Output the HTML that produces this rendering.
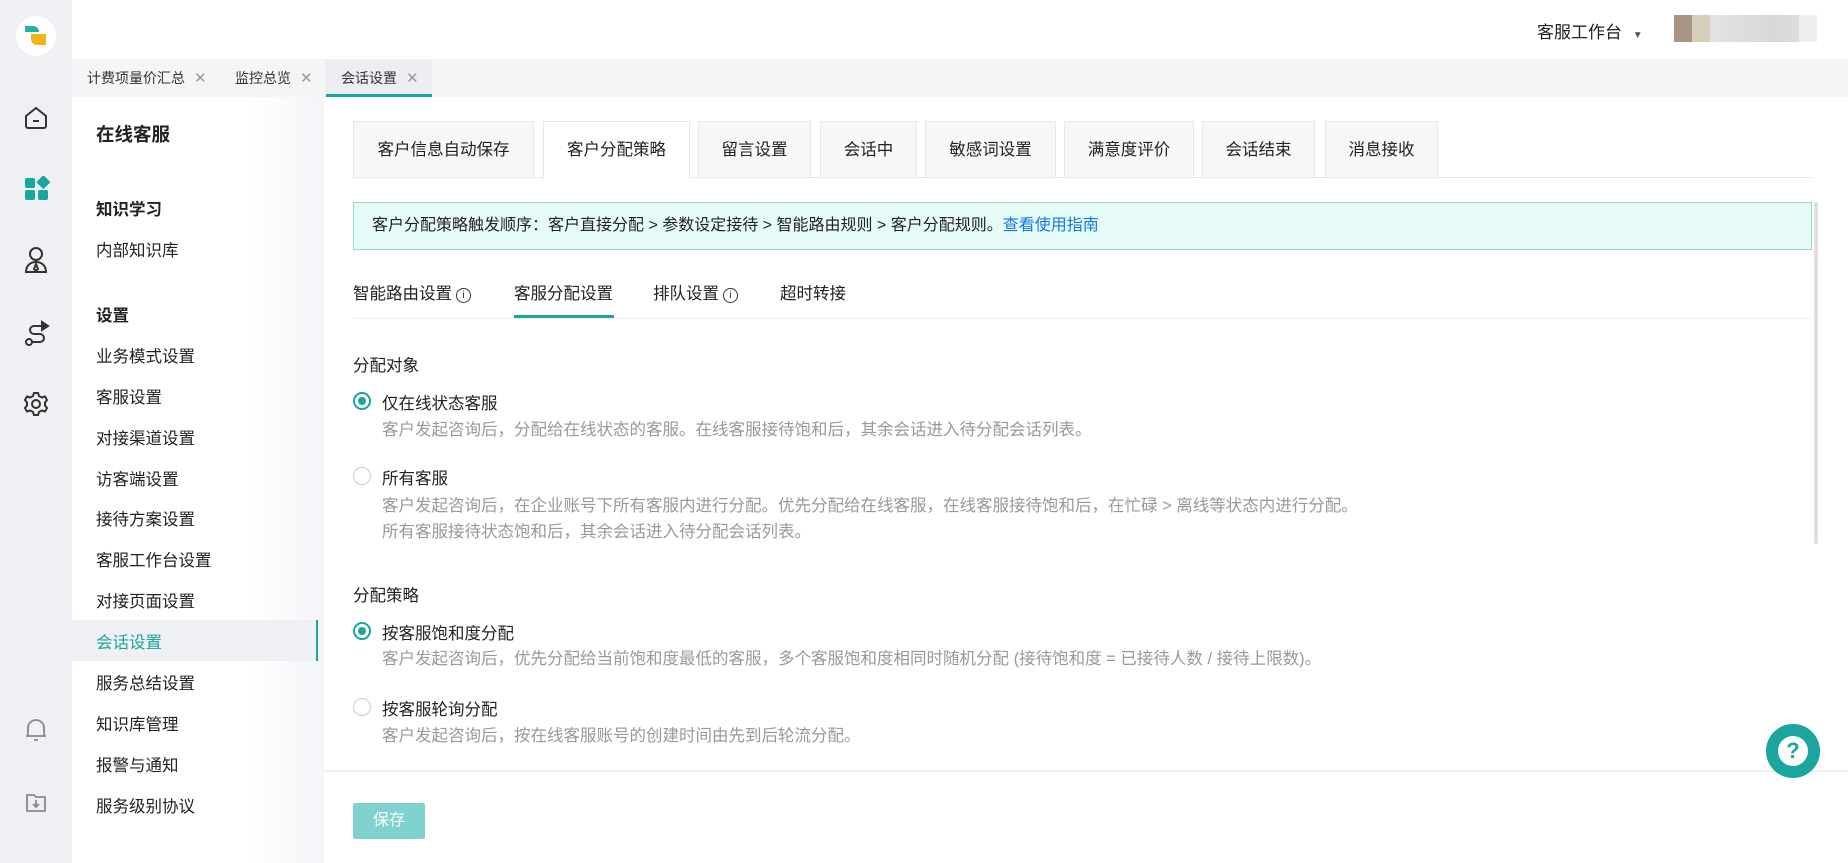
<!DOCTYPE html>
<html><head><meta charset="utf-8"><style>
*{box-sizing:border-box;margin:0;padding:0}
body{width:1848px;height:863px;overflow:hidden;background:#fff;font-family:"Liberation Sans","Noto Sans CJK SC",sans-serif;color:#222;position:relative}
.abs{position:absolute}
#rail{left:0;top:0;width:72px;height:863px;background:#eef0f3}
#hdr{left:72px;top:0;width:1776px;height:59px;background:#fff}
#tabbar{left:72px;top:59px;width:1776px;height:38px;background:#f4f5f7}
.tt{position:absolute;top:59px;height:38px;line-height:38px;font-size:14px;color:#333}
.tt .x{color:#999;margin-left:9px;font-size:15px}
#side{left:72px;top:97px;width:252px;height:766px;background:linear-gradient(90deg,#fff 0%,#fff 70%,#f3f5f8 100%)}
.sm{position:absolute;left:96px;font-size:16.5px;color:#222}
.sb{font-weight:bold}
.tab{position:absolute;top:121px;height:57px;line-height:56px;text-align:center;font-size:16.5px;background:#f7f7f7;border:1px solid #e8e8e8;color:#222}
.tab.on{background:#fff;border-bottom-color:#fff;height:58px}
.st{position:absolute;top:280px;font-size:16.5px;color:#222}
.info{display:inline-block;width:15px;height:15px;border:1.3px solid #333;border-radius:50%;font-size:10px;line-height:13px;text-align:center;vertical-align:1px;margin-left:4px}
.rad{position:absolute;left:353px;width:18px;height:18px;border-radius:50%;border:1px solid #ccc;background:#fff}
.rad.on{border:2px solid #1aa59f}
.rad.on::after{content:"";position:absolute;left:3px;top:3px;width:8px;height:8px;border-radius:50%;background:#1aa59f}
.lbl{position:absolute;left:382px;font-size:16.5px;color:#222}
.dsc{position:absolute;left:382px;font-size:16.5px;color:#999}
.h{position:absolute;left:353px;font-size:16.5px;color:#222}
</style></head><body>
<div id="rail" class="abs"></div>
<div class="abs" style="left:16px;top:16px;width:40px;height:40px;border-radius:50%;background:#fff"></div>
<svg class="abs" style="left:24px;top:25px" width="24" height="22"><path d="M1 1h8a6 6 0 0 1 6 6H1z" fill="#1fb0a8"/><path d="M7 9h15v11h-9a6 6 0 0 1-6-6z" fill="#f6b21a"/></svg>
<svg class="abs" style="left:22px;top:104px" width="28" height="28" fill="none" stroke="#333" stroke-width="2"><path d="M4 12L14 4l10 8v10a2 2 0 0 1-2 2H6a2 2 0 0 1-2-2z"/><path d="M11 17h6"/></svg>
<svg class="abs" style="left:24px;top:176px" width="26" height="26" fill="#1aa59f"><rect x="1" y="2" width="10" height="10" rx="2"/><rect x="14" y="1" width="10" height="10" rx="1" transform="rotate(45 19 6.5)"/><rect x="1" y="14" width="10" height="10" rx="2"/><rect x="14" y="14" width="10" height="10" rx="2"/></svg>
<svg class="abs" style="left:23px;top:246px" width="26" height="28" fill="none" stroke="#333" stroke-width="2"><circle cx="13" cy="8" r="6"/><path d="M3 26c0-6 4-10 10-10s10 4 10 10z"/><path d="M13 18l-2 5 2 2 2-2z"/></svg>
<svg class="abs" style="left:24px;top:320px" width="26" height="28" fill="none" stroke="#333" stroke-width="2"><path d="M18 6H10a4 4 0 0 0 0 8h6a4 4 0 0 1 0 8H8"/><circle cx="5" cy="22" r="3"/><path d="M18 2l6 4-6 4z" fill="#333"/></svg>
<svg class="abs" style="left:23px;top:391px" width="26" height="26" fill="none" stroke="#333" stroke-width="2"><circle cx="13" cy="13" r="4"/><path d="M11 2h4l1 3 3 1.5 3-1 2 3.5-2 2.5v3l2 2.5-2 3.5-3-1-3 1.5-1 3h-4l-1-3-3-1.5-3 1-2-3.5 2-2.5v-3l-2-2.5 2-3.5 3 1 3-1.5z"/></svg>
<svg class="abs" style="left:24px;top:717px" width="24" height="26" fill="none" stroke="#888" stroke-width="1.8"><path d="M4 19V11a8 8 0 0 1 16 0v8H4zM2 19h20M10 23h4"/></svg>
<svg class="abs" style="left:24px;top:790px" width="24" height="24" fill="none" stroke="#888" stroke-width="1.8"><path d="M3 5h7l2 2h9v14H3z"/><path d="M12 10v7M9 14l3 3 3-3"/></svg>

<div id="hdr" class="abs"></div>
<div class="abs" style="left:1537px;top:18px;font-size:17px;color:#222">客服工作台 <span style="font-size:10px;color:#555;margin-left:6px">▼</span></div>
<div class="abs" style="left:1674px;top:15px;width:143px;height:27px;background:linear-gradient(90deg,#a89682 0,#a89682 18px,#d5ceb8 18px,#d5ceb8 36px,#e3e3e3 36px,#d8d8d8 100px,#dcdcdc 125px,#efefef 125px)"></div>

<div id="tabbar" class="abs"></div>
<div class="tt" style="left:87px">计费项量价汇总<span class="x">✕</span></div>
<div class="tt" style="left:235px">监控总览<span class="x">✕</span></div>
<div class="abs" style="left:326px;top:59px;width:106px;height:38px;background:#eceef1;border-bottom:3px solid #1aa59f"></div>
<div class="tt" style="left:341px">会话设置<span class="x">✕</span></div>

<div id="side" class="abs"></div>
<div class="sm sb" style="top:121px;font-size:18.5px">在线客服</div>
<div class="sm sb" style="top:196px">知识学习</div>
<div class="sm" style="top:237px">内部知识库</div>
<div class="sm sb" style="top:302px">设置</div>
<div class="sm" style="top:343px">业务模式设置</div>
<div class="sm" style="top:384px">客服设置</div>
<div class="sm" style="top:425px">对接渠道设置</div>
<div class="sm" style="top:466px">访客端设置</div>
<div class="sm" style="top:506px">接待方案设置</div>
<div class="sm" style="top:547px">客服工作台设置</div>
<div class="sm" style="top:588px">对接页面设置</div>
<div class="abs" style="left:72px;top:620px;width:246px;height:41px;background:#eef0f3;border-right:2px solid #1aa59f"></div>
<div class="sm" style="top:629px;color:#1aa59f">会话设置</div>
<div class="sm" style="top:670px">服务总结设置</div>
<div class="sm" style="top:711px">知识库管理</div>
<div class="sm" style="top:752px">报警与通知</div>
<div class="sm" style="top:793px">服务级别协议</div>

<div class="abs" style="left:353px;top:177px;width:1459px;height:1px;background:#e8e8e8"></div>
<div class="tab" style="left:353px;width:181px">客户信息自动保存</div>
<div class="tab on" style="left:543px;width:147px">客户分配策略</div>
<div class="tab" style="left:698px;width:113px">留言设置</div>
<div class="tab" style="left:820px;width:97px">会话中</div>
<div class="tab" style="left:925px;width:131px">敏感词设置</div>
<div class="tab" style="left:1064px;width:130px">满意度评价</div>
<div class="tab" style="left:1202px;width:113px">会话结束</div>
<div class="tab" style="left:1325px;width:113px">消息接收</div>

<div class="abs" style="left:353px;top:202px;width:1459px;height:48px;background:#e6fbf8;border:1px solid #8fdcd3;line-height:46px;padding-left:18px;font-size:16px;color:#222">客户分配策略触发顺序：客户直接分配 &gt; 参数设定接待 &gt; 智能路由规则 &gt; 客户分配规则。<span style="color:#1677e5">查看使用指南</span></div>
<div class="abs" style="left:1814px;top:202px;width:4px;height:342px;background:#e0e0e0;border-radius:2px"></div>

<div class="abs" style="left:353px;top:318px;width:1459px;height:1px;background:#eee"></div>
<div class="st" style="left:353px">智能路由设置<span class="info">i</span></div>
<div class="st" style="left:514px">客服分配设置</div>
<div class="abs" style="left:514px;top:315px;width:100px;height:3px;background:#1aa59f"></div>
<div class="st" style="left:653px">排队设置<span class="info">i</span></div>
<div class="st" style="left:780px">超时转接</div>

<div class="h" style="top:352px">分配对象</div>
<div class="rad on" style="top:392px"></div>
<div class="lbl" style="top:390px">仅在线状态客服</div>
<div class="dsc" style="top:416px">客户发起咨询后，分配给在线状态的客服。在线客服接待饱和后，其余会话进入待分配会话列表。</div>
<div class="rad" style="top:467px"></div>
<div class="lbl" style="top:465px">所有客服</div>
<div class="dsc" style="top:492px">客户发起咨询后，在企业账号下所有客服内进行分配。优先分配给在线客服，在线客服接待饱和后，在忙碌 &gt; 离线等状态内进行分配。</div>
<div class="dsc" style="top:518px">所有客服接待状态饱和后，其余会话进入待分配会话列表。</div>

<div class="h" style="top:582px">分配策略</div>
<div class="rad on" style="top:622px"></div>
<div class="lbl" style="top:620px">按客服饱和度分配</div>
<div class="dsc" style="top:645px">客户发起咨询后，优先分配给当前饱和度最低的客服，多个客服饱和度相同时随机分配 (接待饱和度 = 已接待人数 / 接待上限数)。</div>
<div class="rad" style="top:698px"></div>
<div class="lbl" style="top:696px">按客服轮询分配</div>
<div class="dsc" style="top:722px">客户发起咨询后，按在线客服账号的创建时间由先到后轮流分配。</div>

<div class="abs" style="left:324px;top:770px;width:1524px;height:2px;background:#f0f0f0"></div>
<div class="abs" style="left:353px;top:803px;width:72px;height:36px;background:#7fd2cd;border-radius:2px;color:#fff;font-size:16px;text-align:center;line-height:36px">保存</div>
<div class="abs" style="left:1766px;top:724px;width:54px;height:54px;border-radius:50%;background:#1aa59f"></div>
<div class="abs" style="left:1778px;top:736px;width:30px;height:30px;border-radius:50%;background:#fff;color:#1aa59f;font-weight:bold;font-size:22px;text-align:center;line-height:30px">?</div>
</body></html>
